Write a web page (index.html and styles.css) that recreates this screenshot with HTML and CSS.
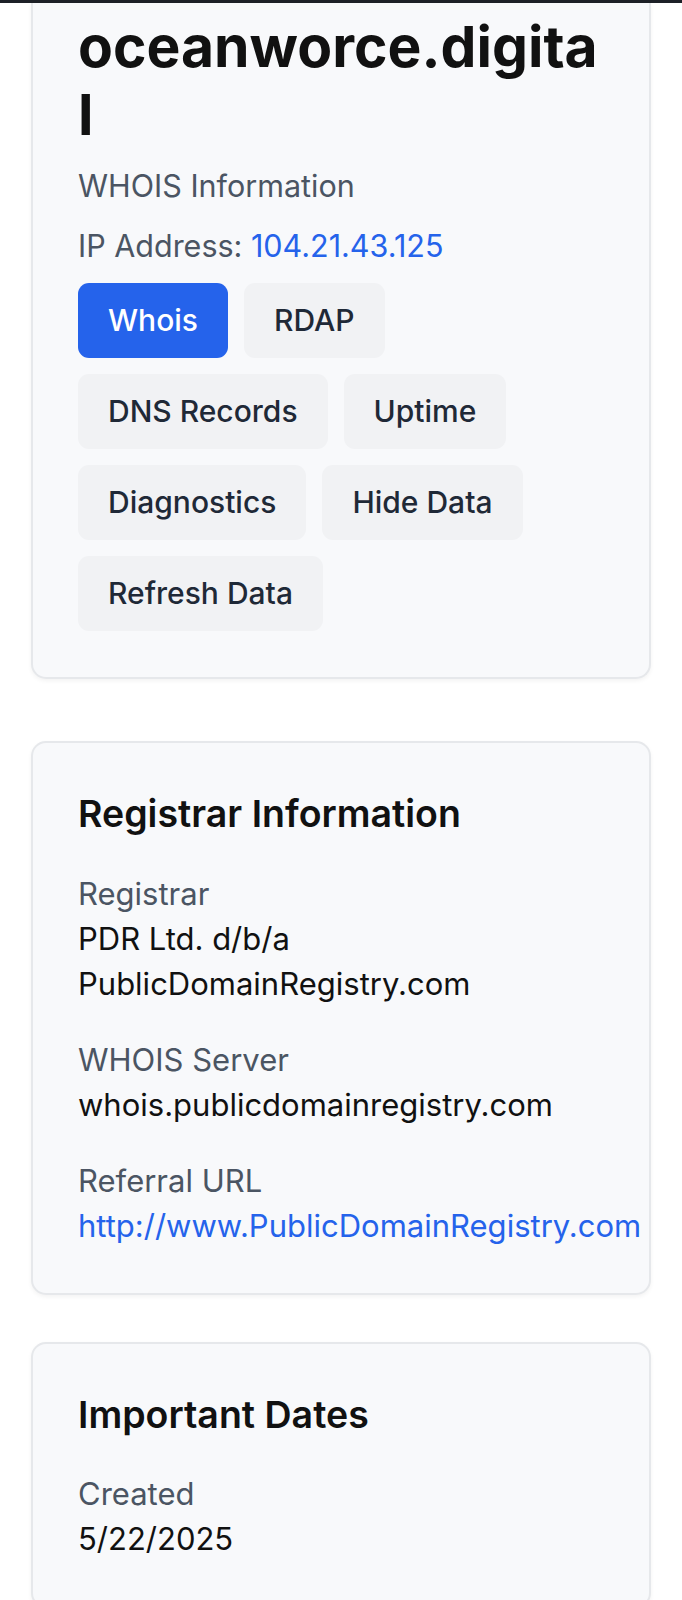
FILE: index.html
```html
<!DOCTYPE html>
<html lang="en">
<head>
<meta charset="utf-8">
<title>oceanworce.digital - WHOIS</title>
<link rel="stylesheet" href="styles.css">
</head>
<body>
<div class="topbar"></div>
<main class="page">
  <section class="card card-head">
    <h1 class="domain">oceanworce.digital</h1>
    <p class="sub">WHOIS Information</p>
    <p class="sub">IP Address: <a class="link" href="#">104.21.43.125</a></p>
    <div class="tabs">
      <button class="tab active">Whois</button>
      <button class="tab">RDAP</button>
      <button class="tab">DNS Records</button>
      <button class="tab">Uptime</button>
      <button class="tab">Diagnostics</button>
      <button class="tab">Hide Data</button>
      <button class="tab">Refresh Data</button>
    </div>
  </section>

  <section class="card card-reg">
    <h2 class="card-title">Registrar Information</h2>
    <dl class="fields">
      <div class="field">
        <dt class="label">Registrar</dt>
        <dd class="value">PDR Ltd. d/b/a PublicDomainRegistry.com</dd>
      </div>
      <div class="field">
        <dt class="label">WHOIS Server</dt>
        <dd class="value">whois.publicdomainregistry.com</dd>
      </div>
      <div class="field">
        <dt class="label">Referral URL</dt>
        <dd class="value"><a class="link" href="#">http://www.PublicDomainRegistry.com</a></dd>
      </div>
    </dl>
  </section>

  <section class="card">
    <h2 class="card-title">Important Dates</h2>
    <dl class="fields">
      <div class="field">
        <dt class="label">Created</dt>
        <dd class="value">5/22/2025</dd>
      </div>
    </dl>
  </section>
</main>
</body>
</html>
```

FILE: styles.css
```css
* { box-sizing: border-box; }

html, body {
  margin: 0;
  padding: 0;
  background: #ffffff;
}

body {
  font-family: Inter, Roboto, "Noto Sans", "Liberation Sans", sans-serif;
  color: #111827;
  font-size: 31px;
  line-height: 45px;
}

.topbar {
  height: 3px;
  background: #1d2027;
}

.page {
  padding: 0 31px 0 31px;
}

.card {
  background: #f8f9fb;
  border: 2px solid #e6e8eb;
  border-radius: 15px;
  box-shadow: 0 2px 4px rgba(0, 0, 0, 0.05);
  padding: 45px;
  margin-bottom: 47px;
}

.card-head {
  border-top: none;
  border-top-left-radius: 0;
  border-top-right-radius: 0;
  padding-top: 10px;
  padding-bottom: 46px;
  margin-bottom: 62px;
}

.domain {
  margin: 0;
  font-size: 57px;
  line-height: 67.5px;
  font-weight: 700;
  color: #111111;
  word-break: break-all;
}

.sub {
  margin: 15px 0 0 0;
  color: #4b5563;
  font-size: 30.5px;
}

.link {
  color: #2563eb;
  text-decoration: none;
}

.tabs {
  margin-top: 15px;
  display: flex;
  flex-wrap: wrap;
  gap: 16px 16px;
}

.tab {
  font-family: inherit;
  font-size: 30px;
  line-height: 45px;
  font-weight: 500;
  padding: 15px 30px;
  border: none;
  border-radius: 11px;
  background: #f1f2f4;
  color: #1f2937;
}

.tab.active {
  background: #2563eb;
  color: #ffffff;
}

.card-title {
  margin: 0 0 30px 0;
  font-size: 37.5px;
  line-height: 52.5px;
  font-weight: 600;
  color: #111111;
}

.fields {
  margin: 0;
  display: flex;
  flex-direction: column;
  gap: 31px;
}

.field {
  display: flex;
  flex-direction: column;
}

.label {
  color: #4b5563;
}

.value {
  margin: 0;
  color: #111111;
}
```
